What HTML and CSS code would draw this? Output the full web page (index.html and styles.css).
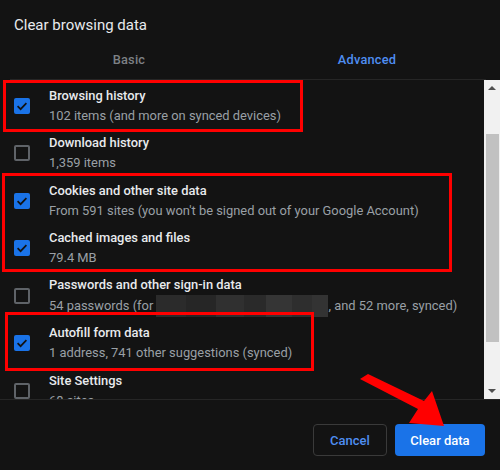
FILE: index.html
```html
<!DOCTYPE html>
<html lang="en">
<head>
    <meta charset="UTF-8">
    <meta name="viewport" content="width=device-width, initial-scale=1.0">
    <title>Clear browsing data</title>
    <link rel="stylesheet" href="styles.css">
</head>
<body>
    <section class="dialog">
        <h1 class="title">Clear browsing data</h1>
        <div class="tabs">
            <div class="tab">Basic</div>
            <div class="tab on">Advanced</div>
        </div>
        <div class="body">
            <ul class="list">
                <li class="row">
                    <span class="box checked"></span>
                    <div class="txt"><p class="name">Browsing history</p><p class="sub">102 items (and more on synced devices)</p></div>
                </li>
                <li class="row">
                    <span class="box"></span>
                    <div class="txt"><p class="name">Download history</p><p class="sub">1,359 items</p></div>
                </li>
                <li class="row">
                    <span class="box checked"></span>
                    <div class="txt"><p class="name">Cookies and other site data</p><p class="sub">From 591 sites (you won't be signed out of your Google Account)</p></div>
                </li>
                <li class="row">
                    <span class="box checked"></span>
                    <div class="txt"><p class="name">Cached images and files</p><p class="sub">79.4 MB</p></div>
                </li>
                <li class="row">
                    <span class="box"></span>
                    <div class="txt"><p class="name">Passwords and other sign-in data</p><p class="sub">54 passwords (for <span class="blur"></span>, and 52 more, synced)</p></div>
                </li>
                <li class="row">
                    <span class="box checked"></span>
                    <div class="txt"><p class="name">Autofill form data</p><p class="sub">1 address, 741 other suggestions (synced)</p></div>
                </li>
                <li class="row">
                    <span class="box"></span>
                    <div class="txt"><p class="name">Site Settings</p><p class="sub">68 sites</p></div>
                </li>
            </ul>
            <div class="scrollbar">
                <span class="arrow up"></span>
                <div class="track"><div class="thumb"></div></div>
                <span class="arrow down"></span>
            </div>
        </div>
        <div class="footer">
            <button class="btn cancel">Cancel</button>
            <button class="btn primary">Clear data</button>
        </div>

        <span class="mark m1"></span>
        <span class="mark m2"></span>
        <span class="mark m3"></span>
        <svg class="pointer" width="500" height="470" viewBox="0 0 500 470">
            <polygon points="360,379 368,374 424,401 432,391 444,426 409,423 418,409" fill="#ff0000"/>
        </svg>
    </section>
</body>
</html>
```

FILE: styles.css
```css
html,body{margin:0; padding:0; width:100%; height:100%; overflow:hidden;}
body{background:#131313; font-family:Roboto, "Liberation Sans", Arial, sans-serif;}
h1,p,ul{margin:0; padding:0;}
ul{list-style:none;}
button{border:none; font-family:inherit; cursor:pointer;}

.dialog{position:relative; width:500px; height:470px;}
.title{font-size:15px; font-weight:400; line-height:18px; color:#e8eaed; padding:16px 0 0 14px;}
.tabs{display:flex; height:39px; margin:6px 14px 0 10px; border-bottom:1px solid #262626;}
.tab{flex:1; display:flex; justify-content:center; align-items:center; font-size:12.8px; font-weight:500; color:#7d8185; letter-spacing:.2px;}
.tab.on{color:#4f8ef2;}

.body{display:flex; height:319px;}
.list{flex:1; overflow:hidden; padding-top:2px;}
.row{display:flex; align-items:center; height:47.5px; padding-left:14px;}
.box{flex:none; width:16px; height:16px; box-sizing:border-box; border:2px solid #5f6368; border-radius:2px; margin-right:19px;}
.box.checked{border:none; background:#1a73e8 url("data:image/svg+xml,%3Csvg xmlns='http://www.w3.org/2000/svg' width='16' height='16'%3E%3Cpath d='M3.6 8.2l3 3 5.8-6' fill='none' stroke='%23121212' stroke-width='1.7'/%3E%3C/svg%3E") no-repeat center;}
.txt{display:flex; flex-direction:column;}
.name{font-size:12.9px; line-height:20px; font-weight:500; color:#e8eaed;}
.sub{font-size:12.9px; line-height:20px; color:#9aa0a6; white-space:nowrap;}
.blur{display:inline-block; width:172px; height:22px; vertical-align:-7px;
    background:linear-gradient(90deg,#2b2b2b 0 30px,#262626 30px 60px,#303030 60px 88px,#2a2a2a 88px 110px,#353535 110px 136px,#2e2e2e 136px 156px,#333 156px 172px);}

.scrollbar{flex:none; width:16px; background:#f1f1f1; display:flex; flex-direction:column; align-items:center;}
.arrow{width:0; height:0; border-left:4px solid transparent; border-right:4px solid transparent; margin:6px 0;}
.arrow.up{border-bottom:4px solid #505050;}
.arrow.down{border-top:4px solid #505050;}
.track{flex:1; width:100%; padding:38px 0 0 2px; box-sizing:border-box;}
.thumb{width:13px; height:208px; background:#c1c1c1;}

.footer{display:flex; justify-content:flex-end; gap:8px; padding:24px 15px 0 0; border-top:1px solid #262626;}
.btn{height:32px; border-radius:4px; font-size:13px; font-weight:500; padding:0; white-space:nowrap;}
.cancel{width:74px; background:transparent; border:1px solid #3a3a3a; color:#4f8ef2;}
.primary{width:90px; background:#1a73e8; color:#fff;}

.mark{position:absolute; border:3px solid #ff0000; box-sizing:border-box;}
.m1{left:3px; top:80px; width:300px; height:52px;}
.m2{left:2px; top:173px; width:450px; height:99px;}
.m3{left:5px; top:312px; width:309px; height:59px;}
.pointer{position:absolute; left:0; top:0; pointer-events:none;}
```
